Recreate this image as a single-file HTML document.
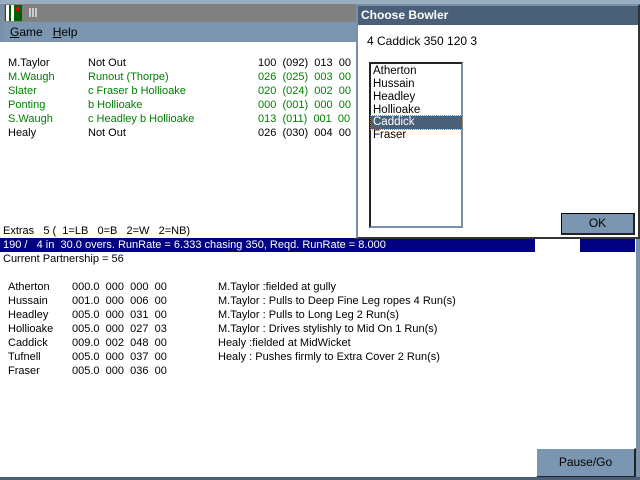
<!DOCTYPE html>
<html><head><style>
*{margin:0;padding:0;box-sizing:border-box}
body{width:640px;height:480px;position:relative;overflow:hidden;background:#7890a8;font-family:"Liberation Sans",sans-serif;font-size:11px;color:#000}
.a{position:absolute;white-space:pre;line-height:14px}
.g{color:#008000}
</style></head><body>
<div class="a" style="left:0;top:0;width:640px;height:4px;background:#9aaec2"></div>
<div class="a" style="left:4px;top:4px;width:632px;height:18px;background:#808080"></div>
<div class="a" style="left:5px;top:5px;width:17px;height:16px;background:#006000"></div>
<div class="a" style="left:6px;top:5px;width:3px;height:16px;background:#fff"></div>
<div class="a" style="left:11px;top:5px;width:3px;height:16px;background:#fff"></div>
<div class="a" style="left:15px;top:7px;width:5px;height:4px;background:#e00000"></div>
<div class="a" style="left:29px;top:8px;width:8px;height:9px;border-left:2px solid #ccc;border-right:2px solid #ccc"></div>
<div class="a" style="left:32px;top:8px;width:2px;height:9px;background:#ccc"></div>
<div class="a" style="left:4px;top:22px;width:632px;height:20px;background:#7b96b0"></div>
<div class="a" style="left:10px;top:25px;font-size:12px"><u>G</u>ame   <u>H</u>elp</div>
<div class="a" style="left:0;top:42px;width:636px;height:435px;background:#fff"></div>
<div class="a" style="left:8px;top:56px">M.Taylor</div><div class="a" style="left:88px;top:56px">Not Out</div><div class="a" style="left:258px;top:56px">100  (092)  013  00</div>
<div class="a g" style="left:8px;top:70px">M.Waugh</div><div class="a g" style="left:88px;top:70px">Runout (Thorpe)</div><div class="a g" style="left:258px;top:70px">026  (025)  003  00</div>
<div class="a g" style="left:8px;top:84px">Slater</div><div class="a g" style="left:88px;top:84px">c Fraser b Hollioake</div><div class="a g" style="left:258px;top:84px">020  (024)  002  00</div>
<div class="a g" style="left:8px;top:98px">Ponting</div><div class="a g" style="left:88px;top:98px">b Hollioake</div><div class="a g" style="left:258px;top:98px">000  (001)  000  00</div>
<div class="a g" style="left:8px;top:112px">S.Waugh</div><div class="a g" style="left:88px;top:112px">c Headley b Hollioake</div><div class="a g" style="left:258px;top:112px">013  (011)  001  00</div>
<div class="a" style="left:8px;top:126px">Healy</div><div class="a" style="left:88px;top:126px">Not Out</div><div class="a" style="left:258px;top:126px">026  (030)  004  00</div>
<div class="a" style="left:3px;top:224px">Extras   5 (  1=LB   0=B   2=W   2=NB)</div>
<div class="a" style="left:0;top:238px;width:535px;height:14px;background:#000080;color:#fff;padding-left:3px">190 /   4 in  30.0 overs. RunRate = 6.333 chasing 350, Reqd. RunRate = 8.000</div>
<div class="a" style="left:580px;top:238px;width:55px;height:14px;background:#000080"></div>
<div class="a" style="left:3px;top:252px">Current Partnership = 56</div>
<div class="a" style="left:8px;top:280px">Atherton
Hussain
Headley
Hollioake
Caddick
Tufnell
Fraser</div>
<div class="a" style="left:72px;top:280px">000.0  000  000  00
001.0  000  006  00
005.0  000  031  00
005.0  000  027  03
009.0  002  048  00
005.0  000  037  00
005.0  000  036  00</div>
<div class="a" style="left:218px;top:280px">M.Taylor :fielded at gully
M.Taylor : Pulls to Deep Fine Leg ropes 4 Run(s)
M.Taylor : Pulls to Long Leg 2 Run(s)
M.Taylor : Drives stylishly to Mid On 1 Run(s)
Healy :fielded at MidWicket
Healy : Pushes firmly to Extra Cover 2 Run(s)</div>
<div class="a" style="left:536px;top:448px;width:100px;height:30px;background:#7b96b0;border:1px solid #fff;border-right:2px solid #222;border-bottom:2px solid #222;text-align:center;line-height:27px;font-size:12px">Pause/Go</div>
<div class="a" style="left:636px;top:42px;width:4px;height:438px;background:#7890a8"></div>
<div class="a" style="left:0;top:477px;width:640px;height:3px;background:#4a6078"></div>
<div class="a" style="left:356px;top:4px;width:284px;height:235px;background:#fff;border:2px solid #7890a8;border-right-color:#333;border-bottom-color:#333"></div>
<div class="a" style="left:358px;top:6px;width:280px;height:19px;background:#4a6078;color:#fff;font-weight:bold;font-size:12px;padding-left:3px;line-height:19px">Choose Bowler</div>
<div class="a" style="left:367px;top:34px;font-size:12px">4 Caddick 350 120 3</div>
<div class="a" style="left:369px;top:62px;width:94px;height:166px;border:2px solid #7890a8;border-top-color:#222;border-left-color:#222;background:#fff"></div>
<div class="a" style="left:373px;top:65px;font-size:11.5px;line-height:13px">Atherton
Hussain
Headley
Hollioake</div>
<div class="a" style="left:371px;top:116px;width:91px;height:13px;background:#4a6078;color:#fff;font-size:11.5px;line-height:13px;padding-left:2px;outline:1px dotted #c08040">Caddick</div>
<div class="a" style="left:373px;top:129px;font-size:11.5px;line-height:13px">Fraser</div>
<div class="a" style="left:561px;top:213px;width:74px;height:22px;background:#7b96b0;border:1px solid #000;border-right:2px solid #222;border-bottom:2px solid #222;text-align:center;line-height:19px;font-size:12px">OK</div>
</body></html>
